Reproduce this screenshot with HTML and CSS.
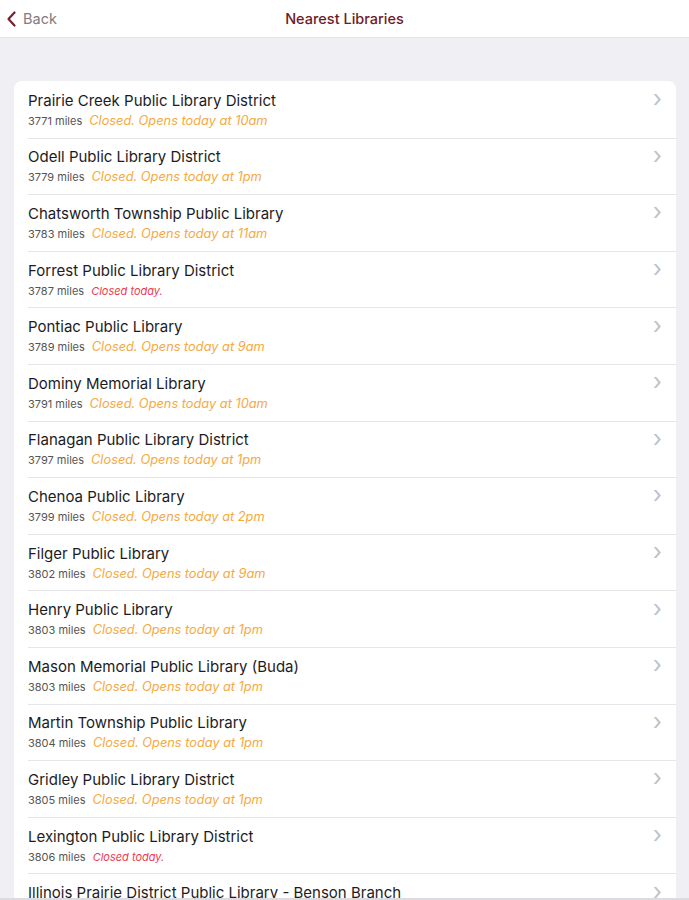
FILE: index.html
```html
<!DOCTYPE html>
<html lang="en">
<head>
  <meta charset="UTF-8" />
  <meta name="viewport" content="width=device-width, initial-scale=1.0"/>
  <title>Nearest Libraries</title>
  <link rel="stylesheet" href="styles.css">
</head>
<body>
  <div class="nav-bar">
    <a class="back" href="#">
      <svg width="11" height="16" viewBox="0 0 11 16"><path d="M8.5 1.5 L2.5 8 L8.5 14.5" fill="none" stroke="#7a1f2b" stroke-width="2.2" stroke-linecap="round" stroke-linejoin="round"/></svg>
      <span>Back</span>
    </a>
    <div class="nav-title">Nearest Libraries</div>
  </div>

  <div class="content">
    <ul class="library-list">
      <li class="row">
        <div class="info">
          <div class="name">Prairie Creek Public Library District</div>
          <div class="sub"><span class="miles">3771 miles</span><span class="status soon">Closed. Opens today at 10am</span></div>
        </div>
        <span class="chevron">&#8250;</span>
      </li>
      <li class="row">
        <div class="info">
          <div class="name">Odell Public Library District</div>
          <div class="sub"><span class="miles">3779 miles</span><span class="status soon">Closed. Opens today at 1pm</span></div>
        </div>
        <span class="chevron">&#8250;</span>
      </li>
      <li class="row">
        <div class="info">
          <div class="name">Chatsworth Township Public Library</div>
          <div class="sub"><span class="miles">3783 miles</span><span class="status soon">Closed. Opens today at 11am</span></div>
        </div>
        <span class="chevron">&#8250;</span>
      </li>
      <li class="row">
        <div class="info">
          <div class="name">Forrest Public Library District</div>
          <div class="sub"><span class="miles">3787 miles</span><span class="status closed">Closed today.</span></div>
        </div>
        <span class="chevron">&#8250;</span>
      </li>
      <li class="row">
        <div class="info">
          <div class="name">Pontiac Public Library</div>
          <div class="sub"><span class="miles">3789 miles</span><span class="status soon">Closed. Opens today at 9am</span></div>
        </div>
        <span class="chevron">&#8250;</span>
      </li>
      <li class="row">
        <div class="info">
          <div class="name">Dominy Memorial Library</div>
          <div class="sub"><span class="miles">3791 miles</span><span class="status soon">Closed. Opens today at 10am</span></div>
        </div>
        <span class="chevron">&#8250;</span>
      </li>
      <li class="row">
        <div class="info">
          <div class="name">Flanagan Public Library District</div>
          <div class="sub"><span class="miles">3797 miles</span><span class="status soon">Closed. Opens today at 1pm</span></div>
        </div>
        <span class="chevron">&#8250;</span>
      </li>
      <li class="row">
        <div class="info">
          <div class="name">Chenoa Public Library</div>
          <div class="sub"><span class="miles">3799 miles</span><span class="status soon">Closed. Opens today at 2pm</span></div>
        </div>
        <span class="chevron">&#8250;</span>
      </li>
      <li class="row">
        <div class="info">
          <div class="name">Filger Public Library</div>
          <div class="sub"><span class="miles">3802 miles</span><span class="status soon">Closed. Opens today at 9am</span></div>
        </div>
        <span class="chevron">&#8250;</span>
      </li>
      <li class="row">
        <div class="info">
          <div class="name">Henry Public Library</div>
          <div class="sub"><span class="miles">3803 miles</span><span class="status soon">Closed. Opens today at 1pm</span></div>
        </div>
        <span class="chevron">&#8250;</span>
      </li>
      <li class="row">
        <div class="info">
          <div class="name">Mason Memorial Public Library (Buda)</div>
          <div class="sub"><span class="miles">3803 miles</span><span class="status soon">Closed. Opens today at 1pm</span></div>
        </div>
        <span class="chevron">&#8250;</span>
      </li>
      <li class="row">
        <div class="info">
          <div class="name">Martin Township Public Library</div>
          <div class="sub"><span class="miles">3804 miles</span><span class="status soon">Closed. Opens today at 1pm</span></div>
        </div>
        <span class="chevron">&#8250;</span>
      </li>
      <li class="row">
        <div class="info">
          <div class="name">Gridley Public Library District</div>
          <div class="sub"><span class="miles">3805 miles</span><span class="status soon">Closed. Opens today at 1pm</span></div>
        </div>
        <span class="chevron">&#8250;</span>
      </li>
      <li class="row">
        <div class="info">
          <div class="name">Lexington Public Library District</div>
          <div class="sub"><span class="miles">3806 miles</span><span class="status closed">Closed today.</span></div>
        </div>
        <span class="chevron">&#8250;</span>
      </li>
      <li class="row">
        <div class="info">
          <div class="name">Illinois Prairie District Public Library - Benson Branch</div>
          <div class="sub"><span class="miles">3807 miles</span><span class="status soon">Closed. Opens today at 1pm</span></div>
        </div>
        <span class="chevron">&#8250;</span>
      </li>
    </ul>
  </div>
  <div class="tool-bar"></div>
</body>
</html>
```

FILE: styles.css
```css
html, body {
  margin: 0;
  padding: 0;
  height: 900px;
  overflow: hidden;
}
body {
  background-color: #efeff4;
  font-family: Inter, Roboto, "Liberation Sans", sans-serif;
  color: #1c1c1e;
  display: flex;
  flex-direction: column;
}
.nav-bar {
  height: 37px;
  flex-shrink: 0;
  background-color: #fff;
  border-bottom: 1px solid #e4e4e8;
  display: flex;
  align-items: center;
  justify-content: center;
  position: relative;
}
.back {
  position: absolute;
  left: 6px;
  top: 10px;
  display: flex;
  align-items: center;
  gap: 6px;
  text-decoration: none;
  color: #857a7d;
  font-size: 14.5px;
}
.nav-title {
  color: #6e1a2a;
  font-size: 14.5px;
  font-weight: 500;
}
.content {
  flex: 1;
  overflow: hidden;
  padding: 43px 13px 0 14px;
}
.library-list {
  list-style: none;
  margin: 0;
  padding: 0;
  background-color: #fff;
  border-radius: 8px;
  overflow: hidden;
}
.row {
  height: 56.6px;
  box-sizing: border-box;
  display: flex;
  align-items: center;
  padding-left: 14px;
  padding-right: 14px;
  position: relative;
}
.row + .row::before {
  content: "";
  position: absolute;
  top: 0;
  left: 14px;
  right: 0;
  height: 1px;
  background-color: #e6e6ea;
}
.info {
  flex: 1;
  display: flex;
  flex-direction: column;
  gap: 4px;
  margin-top: 1px;
}
.name {
  font-size: 15px;
  line-height: 18px;
  color: #1c1c1e;
}
.sub {
  display: flex;
  align-items: baseline;
  gap: 7px;
  line-height: 14px;
}
.miles {
  font-size: 11px;
  color: #555;
}
.status {
  font-style: italic;
}
.status.soon {
  font-size: 12.8px;
  color: #f6a93e;
}
.status.closed {
  font-size: 11px;
  color: #ee3a4f;
}
.chevron {
  color: #c2c2c6;
  font-size: 24px;
  line-height: 1;
  margin-top: -20px;
}
.tool-bar {
  height: 2px;
  flex-shrink: 0;
  background-color: #dcdce0;
}
```
